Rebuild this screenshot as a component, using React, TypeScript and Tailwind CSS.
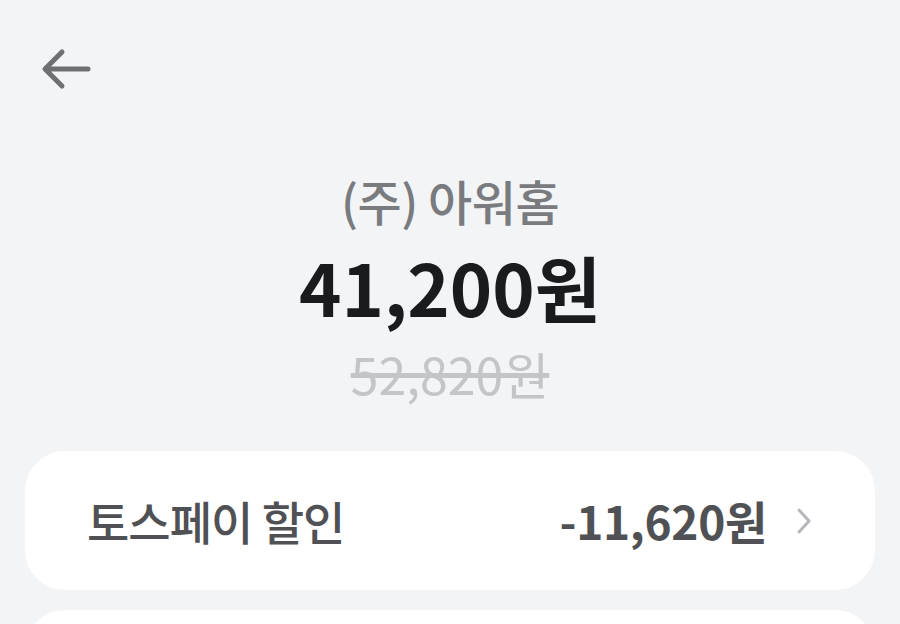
const font = { fontFamily: '"Noto Sans CJK KR", "Noto Sans", sans-serif' }

function BackArrow() {
  return (
    <svg width="52" height="44" viewBox="0 0 52 44" fill="none">
      <path
        d="M48 22H6M22 5L5 22l17 17"
        stroke="#6e7073"
        strokeWidth="5"
        strokeLinecap="round"
        strokeLinejoin="round"
      />
    </svg>
  )
}

function Chevron() {
  return (
    <svg width="18" height="28" viewBox="0 0 18 28" fill="none">
      <path d="M4 3l10 11-10 11" stroke="#b5b7ba" strokeWidth="3" strokeLinecap="round" strokeLinejoin="round" />
    </svg>
  )
}

export default function App() {
  return (
    <div className="w-[900px] h-[624px] overflow-hidden bg-[#f3f4f6] flex flex-col" style={font}>
      {/* 상단 뒤로가기 */}
      <div className="shrink-0 pl-[40px] pt-[47px] h-[169px]">
        <BackArrow />
      </div>

      {/* 결제 금액 */}
      <div className="shrink-0 flex flex-col items-center">
        <p className="text-[48px] leading-[62px] font-medium text-[#797b7f] tracking-[-0.5px]">(주) 아워홈</p>
        <p className="mt-[13px] text-[72px] leading-[84px] font-bold text-[#1a1b1d]">41,200원</p>
        <p className="mt-[15px] text-[50px] leading-[60px] text-[#c3c5c8] line-through">52,820원</p>
      </div>

      {/* 할인 내역 */}
      <div className="shrink-0 mt-[48px] flex flex-col gap-[20px] px-[25px]">
        <div className="h-[139px] rounded-[40px] bg-white flex items-center justify-between pl-[62px] pr-[62px]">
          <span className="text-[46px] font-medium text-[#4f5155] tracking-[-1px]">토스페이 할인</span>
          <div className="flex items-center gap-[28px]">
            <span className="text-[46px] font-semibold text-[#4f5155] tracking-[-0.3px]">-11,620원</span>
            <Chevron />
          </div>
        </div>
        <div className="h-[139px] rounded-[40px] bg-white" />
      </div>
    </div>
  )
}
